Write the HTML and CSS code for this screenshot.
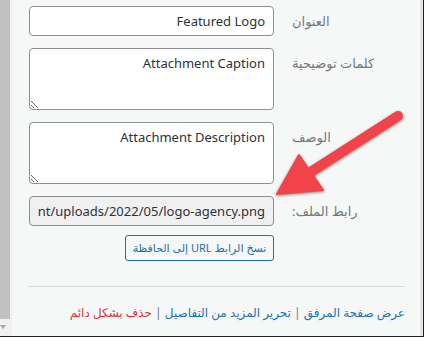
FILE: index.html
```html
<!DOCTYPE html>
<html lang="ar" dir="rtl">
<head>
<meta charset="utf-8">
<title>Attachment details</title>
<link rel="stylesheet" href="styles.css">
</head>
<body>
<div class="screen">
  <div class="frame">
    <div class="pane">
      <div class="row">
        <label class="name" for="t">العنوان</label>
        <input class="field" id="t" type="text" value="Featured Logo">
      </div>
      <div class="row">
        <label class="name" for="c">كلمات توضيحية</label>
        <textarea class="field area" id="c">Attachment Caption</textarea>
      </div>
      <div class="row">
        <label class="name" for="d">الوصف</label>
        <textarea class="field area" id="d">Attachment Description</textarea>
      </div>
      <div class="row">
        <label class="name" for="u">رابط الملف:</label>
        <input class="field readonly" id="u" type="text" readonly value="https://example.com/wp-content/uploads/2022/05/logo-agency.png">
      </div>
      <div class="copy-row">
        <button class="copy-btn" type="button">نسخ الرابط URL إلى الحافظة</button>
      </div>
      <hr class="sep">
      <div class="links">
        <a href="#" class="link">عرض صفحة المرفق</a>
        <span class="bar">|</span>
        <a href="#" class="link">تحرير المزيد من التفاصيل</a>
        <span class="bar">|</span>
        <a href="#" class="link danger">حذف بشكل دائم</a>
      </div>
    </div>
    <div class="scrollbar">
      <div class="thumb"></div>
      <div class="down"></div>
    </div>
  </div>
  <div class="edge"></div>
  <svg class="callout" width="424" height="337" viewBox="0 0 424 337" aria-hidden="true">
    <g class="arrow">
      <line x1="398" y1="116" x2="306" y2="175" stroke="#f2434a" stroke-width="10" stroke-linecap="round"/>
      <polygon points="277,194 299,155 323,190" fill="#f2434a" stroke="#f2434a" stroke-width="2" stroke-linejoin="round"/>
    </g>
  </svg>
</div>
</body>
</html>
```

FILE: styles.css
```css
html, body {
  margin: 0;
  padding: 0;
}

body {
  width: 424px;
  height: 337px;
  overflow: hidden;
  background: #1d2327;
  font-family: "Noto Sans", "DejaVu Sans", sans-serif;
}

.screen {
  position: relative;
  width: 424px;
  height: 336px;
  display: flex;
  flex-direction: row-reverse;
}

.frame {
  display: flex;
  flex: 1;
  height: 336px;
}

.edge {
  width: 4px;
  height: 336px;
  background: #e6e6e6;
  border-right: 1px solid #1d2327;
  box-sizing: border-box;
}

/* in RTL: first child is on the right */
.pane {
  flex: 1;
  background: #f6f7f7;
  padding-top: 6px;
  box-sizing: border-box;
}

.scrollbar {
  width: 12px;
  background: #f0f0f0;
  display: flex;
  flex-direction: column;
  align-items: flex-end;
}

.thumb {
  width: 10px;
  height: 319px;
  background: #c1c1c1;
}

.down {
  width: 0;
  height: 0;
  margin-top: 6px;
  margin-right: 5px;
  border-left: 3.5px solid transparent;
  border-right: 3.5px solid transparent;
  border-top: 4px solid #a3a3a3;
}

.row {
  display: flex;
  align-items: flex-start;
  gap: 18px;
  margin-bottom: 12px;
}

.name {
  width: 128px;
  flex: none;
  text-align: left;
  font-size: 13px;
  line-height: 30px;
  color: #74787d;
}

.field {
  width: 245px;
  height: 30px;
  flex: none;
  box-sizing: border-box;
  margin: 0;
  padding: 0 8px;
  border: 1px solid #8c8f94;
  border-radius: 4px;
  background: #fff;
  color: #2c3338;
  font-family: "Noto Sans", "DejaVu Sans", sans-serif;
  font-size: 13px;
  line-height: 28px;
  direction: rtl;
  outline: none;
}

.area {
  height: 62px;
  padding: 5px 8px;
  line-height: 19px;
  resize: vertical;
}

.readonly {
  background: #f0f0f1;
}

.copy-row {
  margin-top: -3px;
  padding-right: 146px;
}

.copy-btn {
  width: 149px;
  height: 26px;
  margin: 0;
  padding: 0 6px;
  box-sizing: border-box;
  border: 1px solid #2271b1;
  border-radius: 3px;
  background: #f6f7f7;
  color: #2271b1;
  font-family: "Noto Sans", "DejaVu Sans", sans-serif;
  font-size: 11px;
  line-height: 24px;
  white-space: nowrap;
}

.sep {
  margin: 25px 15px 0 16px;
  border: 0;
  border-top: 1px solid #dcdcde;
  height: 0;
}

.links {
  margin-top: 16px;
  padding-right: 15px;
  font-size: 12px;
  line-height: 20px;
  white-space: nowrap;
}

.link {
  color: #2271b1;
  text-decoration: none;
}

.danger {
  color: #d63638;
}

.bar {
  color: #787c82;
}

.callout {
  position: absolute;
  left: 0;
  top: 0;
  pointer-events: none;
}

.arrow {
  filter: drop-shadow(0 1px 1.5px rgba(0, 0, 0, 0.45));
}
```
